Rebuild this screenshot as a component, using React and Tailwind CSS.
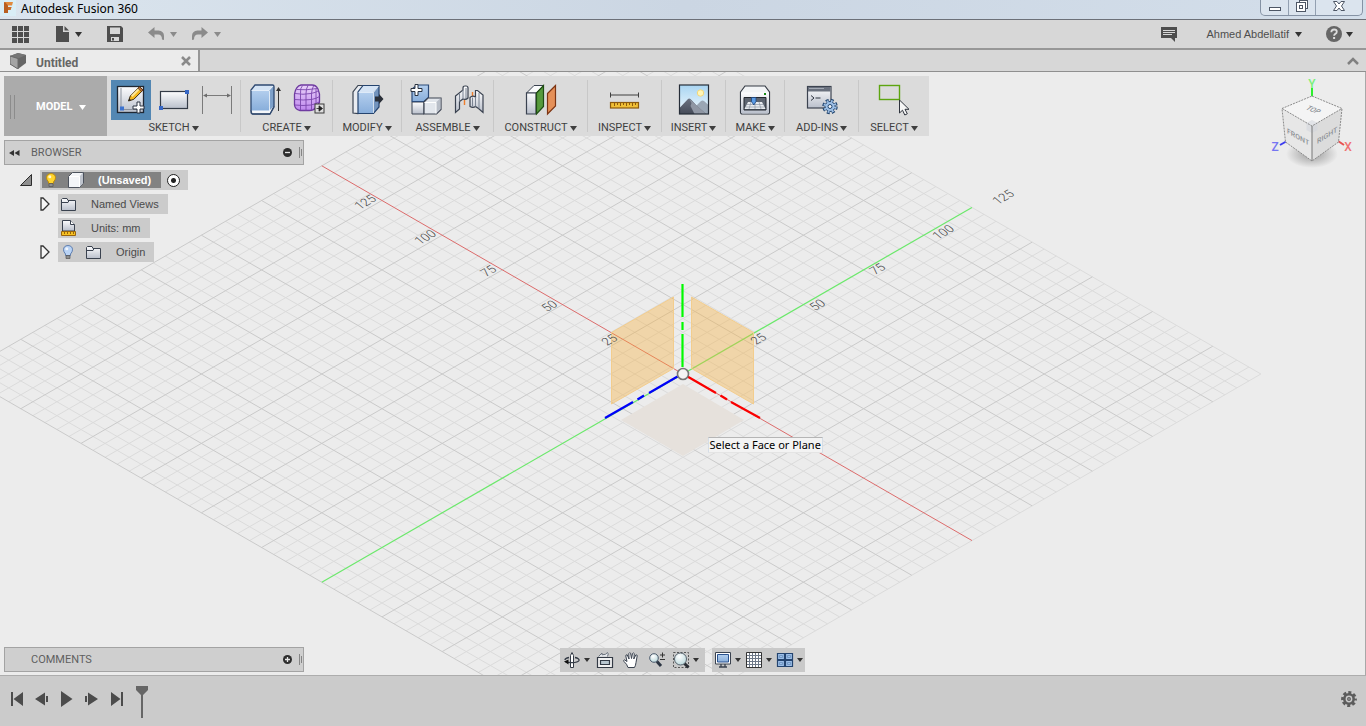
import { useState } from "react";

const DX = 12.04;
const DY = 6.94;
const MIN = -30;
const MAX = 24;

// a runs along the red axis, b along the green one
const project = (a, b) => [683 + (a + b) * DX, 374 + (a - b) * DY];

const gridPath = (major) => {
  let d = "";
  for (let i = MIN; i <= MAX; i++) {
    if (i === 0 || (i % 5 === 0) !== major) continue;
    d += `M${project(i, MIN)}L${project(i, MAX)}M${project(MIN, i)}L${project(MAX, i)}`;
  }
  return d;
};

const rulerLabels = [
  ["125", 360, 210],
  ["100", 420, 245],
  ["75", 486, 277],
  ["50", 547, 312],
  ["25", 607, 346],
  ["125", 998, 205],
  ["100", 938, 240],
  ["75", 875, 275],
  ["50", 815, 311],
  ["25", 756, 345],
];

function Caret({ className = "" }) {
  return (
    <svg width="7" height="5" viewBox="0 0 7 5" className={`shrink-0 ${className}`}>
      <path d="M0 0h7L3.5 5z" fill="currentColor" />
    </svg>
  );
}

function Icon({ size = 30, className = "", children }) {
  return (
    <svg width={size} height={size} viewBox={`0 0 ${size} ${size}`} className={`shrink-0 overflow-visible ${className}`} fill="none">
      {children}
    </svg>
  );
}

function Gradients() {
  return (
    <svg width="0" height="0" className="absolute" aria-hidden="true">
      <defs>
        <linearGradient id="steel" x1="0" y1="0" x2="0" y2="1">
          <stop offset="0" stopColor="#fdfdfe" />
          <stop offset="1" stopColor="#b9bfcb" />
        </linearGradient>
        <linearGradient id="blue" x1="0" y1="0" x2="0" y2="1">
          <stop offset="0" stopColor="#b4cfee" />
          <stop offset="1" stopColor="#88aedb" />
        </linearGradient>
        <linearGradient id="purple" x1="0" y1="0" x2="0" y2="1">
          <stop offset="0" stopColor="#e9d3f9" />
          <stop offset="1" stopColor="#be86ee" />
        </linearGradient>
        <linearGradient id="sky" x1="0" y1="0" x2="0" y2="1">
          <stop offset="0" stopColor="#a9d5f2" />
          <stop offset="1" stopColor="#f2f9fd" />
        </linearGradient>
        <linearGradient id="rock" x1="0" y1="0" x2="0" y2="1">
          <stop offset="0" stopColor="#6b7180" />
          <stop offset="1" stopColor="#454b58" />
        </linearGradient>
        <radialGradient id="lens" cx="0.4" cy="0.3" r="0.8">
          <stop offset="0" stopColor="#ffffff" />
          <stop offset="1" stopColor="#b4d4d8" />
        </radialGradient>
        <radialGradient id="shade">
          <stop offset="0" stopColor="#777" stopOpacity="0.7" />
          <stop offset="1" stopColor="#777" stopOpacity="0" />
        </radialGradient>
      </defs>
    </svg>
  );
}

const Plus = ({ x, y }) => (
  <path
    transform={`translate(${x} ${y})`}
    d="M-1.5-5.5h3v4h4v3h-4v4h-3v-4h-4v-3h4z"
    fill="#fff"
    stroke="#2b3340"
  />
);

const icons = {
  sketch: (
    <Icon>
      <rect x="1.5" y="1.5" width="26" height="26" fill="url(#steel)" stroke="#1f2733" strokeWidth="1.3" />
      <path d="M5 3v21M4 24.5h18" stroke="#8a919c" />
      <rect x="4" y="21.5" width="4" height="4" fill="#3d73cf" />
      <path d="M12.500 16l1.800-5L23.500 1.800l3.600 3.200-9.300 9.300z" fill="#f5b81e" stroke="#3b2a10" />
      <path d="M15 10.500l7.500-7.500 1.500 1.300-7.500 7.700z" fill="#fde79a" />
      <path d="M22 3.300l1.500-1.500 3.600 3.200-1.600 1.600z" fill="#b9703b" stroke="#4b2a12" strokeWidth="0.7" />
      <path d="M12.500 16l.8-2.500 1.700 1.600z" fill="#222" />
      <Plus x={22.5} y={22.5} />
    </Icon>
  ),
  rectangle: (
    <Icon>
      <rect x="1.5" y="6.5" width="27" height="17" fill="url(#steel)" stroke="#333a46" strokeWidth="1.2" />
      <rect x="26" y="5" width="4" height="4" fill="#3767c6" />
      <rect x="0" y="21" width="4" height="4" fill="#3767c6" />
    </Icon>
  ),
  dimension: (
    <Icon>
      <path d="M.5 1v28M29.5 1v28M2 10.5h26" stroke="#7b7b7b" />
      <path d="M1 10.5l4-2v4zM29 10.5l-4-2v4z" fill="#6d6d6d" />
    </Icon>
  ),
  extrude: (
    <Icon>
      <path d="M1 25l4-4h19l-4 8H2z" fill="#f4f6f9" stroke="#3b4452" />
      <path d="M1 5h18.5v20.5H1z" fill="url(#blue)" />
      <path d="M1 5l4-5h19l-4.500 5z" fill="#d5e4f5" />
      <path d="M19.500 5L24 0v21l-4.500 4.500z" fill="#7ea1ca" />
      <path d="M1 27V5l4-5h17.500q1.500 0 1.500 1.500V22l-4 7H3q-2 0-2-2z" stroke="#2f4a72" strokeWidth="1.3" />
      <path d="M1.500 5.500h17.500L23 1M19.500 6v20" stroke="#f0f6fc" strokeWidth="0.8" />
      <path d="M28.500 5v21" stroke="#333" />
      <path d="M28.500 2l2.500 4h-5z" fill="#333" />
    </Icon>
  ),
  form: (
    <Icon>
      <path d="M8 0h11q4 0 6 4l1.500 5v8q-1 4-4 6-2 2.500-6 2.500H7q-5-1-5.500-5.500V9Q3 1 8 0z" fill="url(#purple)" stroke="#6e3aa0" strokeWidth="1.300" />
      <path d="M2 8.500q8 1.500 16 0 5-1 8-3M1.500 14.500q9 1 17 0 5-1 8-3M2 20q8 1 16 0 5-1 8-3M7.500 8.500v16.500M13 8.500v17M18.500 8.500v16.500M7.500 8.500Q7 3 9.500.500M13 8.500q0-5 2-8M18.500 8.500q.5-5 2-7.500M4 4.500q9 1 20-1M23 4v19" stroke="#7a46ad" strokeWidth="0.900" />
      <rect x="22" y="19" width="9" height="9" fill="#dedede" stroke="#3a3a3a" />
      <path d="M23.500 23.500h3M26 20.800l3.500 2.700-3.500 2.700z" fill="#222" stroke="#222" strokeWidth="0.800" />
    </Icon>
  ),
  pressPull: (
    <Icon>
      <path d="M1 28V7l5-6.500h5V22l-5 6.500z" fill="#e9ecf1" stroke="#3b4452" strokeWidth="1.200" />
      <path d="M6 7h15.500v21.500H6z" fill="url(#blue)" />
      <path d="M6 7L11 .5h16L21.500 7z" fill="#d5e4f5" />
      <path d="M21.500 7L27 .5V22l-5.500 6.500z" fill="#7394bd" />
      <path d="M6 28.500V7L11 .5h16V22l-5.500 6.500z" stroke="#25446f" strokeWidth="1.200" />
      <path d="M6.500 7.500h15v20.500M21.500 7.500L26.500 1" stroke="#f0f6fc" strokeWidth="0.700" />
      <path d="M23 11.500h4V9l4.500 5-4.500 5v-2.500h-4z" fill="#2a2f38" />
    </Icon>
  ),
  component: (
    <Icon>
      <path d="M1 17h12v12H1z" fill="url(#steel)" stroke="#3d4452" />
      <path d="M1 16.500V4l5-4h11.500v12.500L13 16.500z" fill="url(#blue)" stroke="#2b4a78" strokeWidth="1.200" />
      <path d="M13 17l4-4h13v11.500L25.500 29H13z" fill="#e2e6ec" stroke="#3d4452" strokeWidth="1.200" />
      <path d="M25 17.500L29.500 13v11L25 28.500z" fill="#b8bec8" />
      <path d="M13.500 17.500H25V28.500" stroke="#fff" />
      <Plus x={5.5} y={5} />
    </Icon>
  ),
  joint: (
    <Icon>
      <path d="M1.500 11L9 5V3Q9 1 11 1h1q2 0 2 2v10q-2 2-5 1l-3.500 2.500V24l-4 3.500z" fill="url(#steel)" stroke="#3a4250" strokeWidth="1.200" />
      <path d="M5.500 8.500v8M9 5v9M12 3v10.500" stroke="#7b8493" />
      <path d="M10.500 15v5M18.500 7v5" stroke="#ee7d2c" strokeWidth="1.400" />
      <path d="M16 12.500q2.500-2.500 5.500-.5V5.500h2L29 10v17.500l-4.500-4-3-2q-2.500 1.800-5.500 0z" fill="url(#steel)" stroke="#3a4250" strokeWidth="1.200" />
      <path d="M21.500 12v9.500M25 8v15.500M18.500 12.500v9" stroke="#7b8493" />
    </Icon>
  ),
  plane: (
    <Icon>
      <path d="M.5 8L8 .5h9.500L10 8z" fill="#fafbfc" stroke="#3a4250" />
      <path d="M.5 8H10v21H.5z" fill="url(#steel)" stroke="#3a4250" strokeWidth="1.200" />
      <path d="M10.500 8L17.500.5v21L10.500 29z" fill="#569a3c" stroke="#1f4d14" strokeWidth="1.200" />
      <path d="M21.500 8.500L29.500.5v20.500L21.500 29z" fill="#e59058" stroke="#7d3513" strokeWidth="1.200" />
    </Icon>
  ),
  measure: (
    <Icon>
      <path d="M.5 7.500v5M28.500 7.500v5M1 10h27" stroke="#3f3f3f" />
      <rect x=".5" y="17.500" width="28" height="5.500" fill="#f0bf35" stroke="#8d5a0d" strokeWidth="1.200" />
      <path d="M4.500 18v3M7.500 18v2M10.500 18v3M13.500 18v2M16.500 18v3M19.500 18v2M22.500 18v3M25.500 18v2" stroke="#8d5a0d" />
    </Icon>
  ),
  canvas: (
    <Icon>
      <rect x=".5" y="0" width="29" height="29" fill="url(#sky)" />
      <circle cx="21.500" cy="8" r="3.200" fill="#fff6b8" stroke="#f3d77a" />
      <path d="M14 24l8-8q1.500-1 3 0l4.500 4v9H14z" fill="#9aa6b4" />
      <path d="M.5 23L9 14q1-1 2.500 0l6 6.500L27 29H.5z" fill="url(#rock)" />
      <path d="M10.500 14l2 4-1 3 4 8H27L16 19z" fill="#9097a4" />
      <rect x=".5" y="0" width="29" height="29" stroke="#262d38" strokeWidth="1.200" />
    </Icon>
  ),
  print: (
    <Icon>
      <path d="M.5 7L5 1h20l4.500 6v20q0 2-2 2h-25q-2 0-2-2z" fill="#f2f4f6" stroke="#343a44" strokeWidth="1.200" />
      <path d="M1 7.500h28v20q0 1-1.500 1h-25q-1.500 0-1.500-1z" fill="url(#steel)" />
      <rect x="24" y="8" width="2" height="2" fill="#168a16" />
      <path d="M4 12.500h22V25H4z" fill="#5d6470" stroke="#23272e" />
      <path d="M8 17h14l3.500 7h-21z" fill="#e8ebef" />
      <path d="M7 19.500h16M6 22h18M11 17l-2 7M15 17v7M19 17l2 7" stroke="#8e97a5" strokeWidth="0.700" />
      <path d="M11.500 12.500h4.500v4l-2.200 3.500-2.300-3.500z" fill="#5b9ce6" stroke="#1d447e" strokeWidth="0.800" />
    </Icon>
  ),
  scripts: (
    <Icon>
      <rect x=".5" y="1.500" width="23.500" height="21.500" fill="url(#steel)" stroke="#3c4350" strokeWidth="1.200" />
      <path d="M1 2h22.500v4.500H1z" fill="#69707d" />
      <path d="M2 3.500h15" stroke="#a3a9b4" />
      <path d="M4 10.500l3 2.500-3 2.500M8.500 13h5" stroke="#2f3540" />
      <circle cx="23" cy="21.500" r="5.500" stroke="#23466f" strokeWidth="4.500" strokeDasharray="2.500 1.820" />
      <circle cx="23" cy="21.500" r="5" fill="#9dbfe6" stroke="#23466f" />
      <circle cx="23" cy="21.500" r="5.300" stroke="#9dbfe6" strokeWidth="2.600" strokeDasharray="1.600 2.560" strokeDashoffset="-0.400" />
      <circle cx="23" cy="21.500" r="2" fill="#f3f7fb" stroke="#23466f" />
    </Icon>
  ),
  select: (
    <Icon>
      <rect x=".5" y=".5" width="20" height="14" stroke="#5da510" strokeWidth="1.400" />
      <path d="M20.500 15v13l3-2.800 2.300 4.800 2.500-1.200-2.300-4.500h4z" fill="#f6f6f6" stroke="#2e333c" />
    </Icon>
  ),
};

const toolGroups = [
  { label: "SKETCH", width: "w-[134px]", tools: ["sketch", "rectangle", "dimension"] },
  { label: "CREATE", width: "w-[92px]", tools: ["extrude", "form"] },
  { label: "MODIFY", width: "w-[69px]", tools: ["pressPull"] },
  { label: "ASSEMBLE", width: "w-[92px]", tools: ["component", "joint"] },
  { label: "CONSTRUCT", width: "w-[94px]", tools: ["plane"] },
  { label: "INSPECT", width: "w-[74px]", tools: ["measure"] },
  { label: "INSERT", width: "w-[64px]", tools: ["canvas"] },
  { label: "MAKE", width: "w-[59px]", tools: ["print"] },
  { label: "ADD-INS", width: "w-[74px]", tools: ["scripts"] },
  { label: "SELECT", width: "w-[70px]", tools: ["select"] },
];

function TitleBar() {
  return (
    <header className="flex h-5 shrink-0 items-start justify-between border-b border-[#6c7078] bg-linear-to-r from-[#dbe5ee] via-[#cbd6e3] to-[#d3deea]">
      <div className="flex items-center gap-[5px]">
        <svg width="16" height="17" viewBox="0 0 16 17">
          <path d="M0 0h16v16H0z" fill="#d9eef6" />
          <path d="M4 13V3q0-1 1-1h8l-1 3.500H8V7h3.500l-1 3H8v3z" fill="#e28a3c" />
          <path d="M4 13V3q0-1 1-1l3 3.500V13z" fill="#b95f20" />
          <path d="M8 7h3.500l-1 3H8z" fill="#c76d28" />
        </svg>
        <h1 className="font-['Noto_Sans'] text-xs leading-[17px] text-black">Autodesk Fusion 360</h1>
      </div>
      <div className="mr-[3px] flex h-4 divide-x divide-[#93a0b1] rounded-b-[5px] border border-t-0 border-[#8592a4] bg-[#dbe4ee]">
        <button aria-label="Minimize" className="flex w-7 items-center justify-center">
          <svg width="12" height="12" viewBox="0 0 12 12">
            <rect x=".5" y="5.500" width="11" height="3" fill="#fff" stroke="#4d5665" />
          </svg>
        </button>
        <button aria-label="Restore" className="flex w-[27px] items-start justify-center">
          <svg width="12" height="13" viewBox="0 0 12 13" fill="#fff" stroke="#4d5665">
            <rect x="3.500" y="0.500" width="8" height="8" />
            <rect x=".5" y="2.500" width="9" height="9" />
            <rect x="3.500" y="5.500" width="3" height="3" />
          </svg>
        </button>
        <button aria-label="Close" className="flex w-[46px] items-start justify-center pt-px">
          <svg width="12" height="11" viewBox="0 0 12 11">
            <path d="M.5.500h3.500l2 2.500 2-2.500h3.500L8.500 5l3 4.500H8L6 7 4 9.500H.5l3-4.500z" fill="#fff" stroke="#4d5665" />
          </svg>
        </button>
      </div>
    </header>
  );
}

function AppBar() {
  return (
    <div className="flex h-[30px] shrink-0 items-center justify-between border-b-2 border-[#979797] bg-[#d7d7d7] pr-[13px] pl-3 text-[#4e4e4e]">
      <div className="flex items-center gap-[25px]">
        <button aria-label="Data panel" className="pr-[2px]">
          <svg width="17" height="17" viewBox="0 0 17 17" fill="currentColor">
            <path d="M0 0h5v5H0zM6 0h5v5H6zM12 0h5v5h-5zM0 6h5v5H0zM6 6h5v5H6zM12 6h5v5h-5zM0 12h5v5H0zM6 12h5v5H6zM12 12h5v5h-5z" />
          </svg>
        </button>
        <button aria-label="File" className="flex items-center gap-[6px]">
          <svg width="13" height="16" viewBox="0 0 13 16" fill="currentColor">
            <path d="M0 0h7v6h6v10H0z" />
            <path d="M8.500 0L13 4.500H8.500z" />
          </svg>
          <Caret className="text-[#333]" />
        </button>
        <button aria-label="Save">
          <svg width="16" height="16" viewBox="0 0 16 16">
            <path d="M0 0h14l2 2v14H0z" fill="currentColor" />
            <path d="M3 1.500h10V8H3z" fill="#d7d7d7" />
            <path d="M4 11h8v4H4z" fill="#d7d7d7" />
            <path d="M5 12h2v2.500H5z" fill="currentColor" />
          </svg>
        </button>
        <div className="flex gap-[15px] text-[#8b8b8b]">
          <button aria-label="Undo" className="flex items-center gap-[6px]">
            <svg width="16" height="14" viewBox="0 0 16 14" fill="currentColor">
              <path d="M0 5.500L6.500 0v3.500h4Q16 4 16 9v4l-2-.5Q14 7.500 10 7.500H6.500V11z" />
            </svg>
            <Caret />
          </button>
          <button aria-label="Redo" className="flex items-center gap-[6px]">
            <svg width="16" height="14" viewBox="0 0 16 14" fill="currentColor">
              <path d="M16 5.500L9.500 0v3.500h-4Q0 4 0 9v4l2-.5Q2 7.500 6 7.500h3.500V11z" />
            </svg>
            <Caret />
          </button>
        </div>
      </div>
      <div className="flex items-center">
        <button aria-label="Comments" className="mr-[29px]">
          <svg width="16" height="15" viewBox="0 0 16 15">
            <path d="M0 0h16v11h-2v4l-4-4H0z" fill="currentColor" />
            <path d="M2 3.500h12M2 5.500h12M2 7.500h9" stroke="#d7d7d7" />
          </svg>
        </button>
        <button className="mr-6 flex items-center gap-[6px] pt-px text-[11px]">
          Ahmed Abdellatif
          <Caret className="text-[#333]" />
        </button>
        <button aria-label="Help" className="flex items-center gap-1">
          <svg width="16" height="16" viewBox="0 0 16 16">
            <circle cx="8" cy="8" r="8" fill="#666" />
            <path d="M5.300 6.300q0-2.800 2.800-2.800 2.700 0 2.700 2.300 0 1.300-1.500 2.100-1.200.7-1.200 1.900" fill="none" stroke="#dcdcdc" strokeWidth="1.800" />
            <path d="M7.100 11h2v2h-2z" fill="#dcdcdc" />
          </svg>
          <Caret className="text-[#333]" />
        </button>
      </div>
    </div>
  );
}

function DocumentTabs() {
  return (
    <div className="flex h-[22px] shrink-0 items-stretch justify-between border-b border-[#8f8f8f] bg-[#d7d7d7]">
      <div className="flex w-[200px] items-center justify-between border-r-2 border-[#979797] bg-[#ebebeb] pr-[7px] pl-[10px]">
        <span className="flex items-center gap-[10px] font-[Roboto] text-xs font-bold text-[#666]">
          <svg width="16" height="16" viewBox="0 0 16 16">
            <path d="M0 3L8 0l8 2v8l-8 6-8-5z" fill="#666" />
            <path d="M0 3l8 2.500V16l-8-5z" fill="#a5a5a5" />
            <path d="M0 3L8 0l8 2-8 3.500z" fill="#767676" />
            <path d="M0 3l8 2.500V16l-8-5z" fill="none" stroke="#6a6a6a" />
          </svg>
          <span className="pt-1">Untitled</span>
        </span>
        <button aria-label="Close document" className="text-[#8a8a8a]">
          <svg width="10" height="10" viewBox="0 0 10 10">
            <path d="M1 1l8 8M9 1L1 9" stroke="currentColor" strokeWidth="2.500" />
          </svg>
        </button>
      </div>
      <button aria-label="Collapse" className="mr-[7px]">
        <svg width="12" height="8" viewBox="0 0 12 8">
          <path d="M1 7l5-5 5 5" fill="none" stroke="#808080" strokeWidth="2.500" />
        </svg>
      </button>
    </div>
  );
}

function Ribbon() {
  const [active, setActive] = useState("sketch");

  return (
    <div className="flex h-[60px] w-fit bg-[#dbdbdb] font-[Roboto] text-[11px] text-[#3f3f3f]">
      <button className="flex w-[103px] items-center gap-[6px] bg-[#ababab] pt-[2px] pl-[6px] font-bold text-white">
        <svg width="5" height="24" viewBox="0 0 5 24" className="mr-[15px]">
          <path d="M.5 0v24M4.500 0v24" stroke="#8c8c8c" />
        </svg>
        MODEL
        <Caret />
      </button>
      <div className="flex divide-x divide-[#c8c8c8] py-1">
        {toolGroups.map((group) => (
          <div key={group.label} className={`flex flex-col items-center ${group.width}`}>
            <div className="flex gap-[3px]">
              {group.tools.map((tool) => (
                <button
                  key={tool}
                  aria-label={tool}
                  onClick={() => setActive(tool)}
                  className={`flex h-10 w-10 items-center justify-center ${active === tool ? "bg-[#5387b3]" : ""}`}
                >
                  {icons[tool]}
                </button>
              ))}
            </div>
            <button className="flex items-center gap-[2px] leading-4">
              {group.label}
              <Caret />
            </button>
          </div>
        ))}
      </div>
    </div>
  );
}

function PanelHeader({ title, open }) {
  return (
    <div className="flex h-[25px] w-[300px] items-center border border-[#a3a3a3] bg-[#cfcfcf] font-[Roboto] text-[11px] text-[#5f5f5f]">
      <span className="flex w-[26px] pl-1">
        {open && (
          <svg width="11" height="6" viewBox="0 0 11 6">
            <path d="M5 0v6L0 3zM10.500 0v6l-5-3z" fill="#333" />
          </svg>
        )}
      </span>
      <h2 className="flex-1 pt-[2px]">{title}</h2>
      <button aria-label={open ? "Hide" : "Show"} className="mr-[7px]">
        <svg width="9" height="9" viewBox="0 0 9 9">
          <circle cx="4.500" cy="4.500" r="4.500" fill="#2d2d2d" />
          <path d={open ? "M2 4.500h5" : "M2 4.500h5M4.500 2v5"} stroke="#e6e6e6" strokeWidth="1.300" />
        </svg>
      </button>
      <svg width="4" height="11" viewBox="0 0 4 11">
        <path d="M.5 0v11M2.500 2v7" stroke="#858585" />
      </svg>
    </div>
  );
}

function Bulb({ fill, stroke }) {
  return (
    <svg width="10" height="15" viewBox="0 0 10 15">
      <path d="M5 .5q4.500.300 4.500 4.300 0 2-2 4.200v1.500h-5V9q-2-2.200-2-4.200Q.5.800 5 .5z" fill={fill} stroke={stroke} />
      <circle cx="3.800" cy="3.800" r="1.500" fill="#fff" opacity="0.800" />
      <path d="M3 10.500h4v3H3z" fill="#8d8d8d" stroke="#555" strokeWidth="0.700" />
    </svg>
  );
}

function Folder() {
  return (
    <svg width="15" height="13" viewBox="0 0 15 13">
      <path d="M.5 12.500V1.500L1.500.5H6l1 2h7.500v10z" fill="url(#steel)" stroke="#3a424f" />
      <path d="M1 4.500h6l1-2" fill="none" stroke="#3a424f" />
    </svg>
  );
}

function Expander() {
  return (
    <button aria-label="Expand" className="flex w-[18px]">
      <svg width="10" height="14" viewBox="0 0 10 14">
        <path d="M1 1h2l6 6-6 6H1z" fill="#f6f6f6" stroke="#333" strokeWidth="1.300" />
      </svg>
    </button>
  );
}

function BrowserTree() {
  return (
    <ul className="mt-[5px] flex flex-col gap-1 text-[11px] text-[#4a4a4a]">
      <li className="flex h-5 items-center pl-4">
        <button aria-label="Collapse" className="flex w-5">
          <svg width="12" height="12" viewBox="0 0 12 12">
            <path d="M.5 11.500L11.500.5v11z" fill="#8f8f8f" stroke="#2d2d2d" />
          </svg>
        </button>
        <div className="flex h-5 items-center gap-[6px] bg-[#cbcbcb] pr-2 pl-[2px]">
          <span className="flex h-4 items-center bg-[#828282] pr-[10px] pl-1 font-bold text-white">
            <Bulb fill="#ffd42e" stroke="#b98a12" />
            <svg width="16" height="16" viewBox="0 0 16 16" className="mr-[14px] ml-3">
              <path d="M.5 4.500l4-4h11v10.500l-4 4.500H.5z" fill="#f3f5f8" stroke="#4c525d" />
              <path d="M11.500 4.500l3.500-4v10.500l-3.500 4z" fill="#bfc4cd" />
              <path d="M1 4.500h10.500V15" fill="none" stroke="#fff" />
            </svg>
            (Unsaved)
          </span>
          <input type="radio" name="activeComponent" aria-label="Activate component" defaultChecked className="h-[13px] w-[13px] appearance-none rounded-full border border-[#222] bg-[radial-gradient(circle,#222_0_2px,#fff_3px)]" />
        </div>
      </li>
      <li className="flex h-5 items-center pl-9">
        <Expander />
        <div className="flex h-5 items-center gap-[15px] bg-[#cbcbcb] pr-[9px] pl-[3px]">
          <Folder />
          Named Views
        </div>
      </li>
      <li className="flex h-5 items-center pl-[54px]">
        <div className="flex h-5 items-center gap-[15px] bg-[#cbcbcb] pr-[9px] pl-[3px]">
          <svg width="15" height="16" viewBox="0 0 15 16">
            <path d="M1.500 11V.5h8l4 4V11z" fill="url(#steel)" stroke="#3a424f" />
            <path d="M9.500.500v4h4" fill="#fff" stroke="#3a424f" />
            <path d="M.5 11.500h14v4H.5z" fill="#f5c021" stroke="#9a650b" />
            <path d="M3.500 12v2M6.500 12v2M9.500 12v2M12.500 12v2" stroke="#9a650b" />
          </svg>
          Units: mm
        </div>
      </li>
      <li className="flex h-5 items-center pl-9">
        <Expander />
        <div className="flex h-5 items-center bg-[#cbcbcb] pr-[9px] pl-[5px]">
          <Bulb fill="#b9d3f5" stroke="#5f7fb0" />
          <span className="flex items-center gap-[15px] pl-[13px]">
            <Folder />
            Origin
          </span>
        </div>
      </li>
    </ul>
  );
}

function Scene() {
  return (
    <svg className="absolute inset-0 h-full w-full" viewBox="0 72 1365 603" preserveAspectRatio="xMidYMid slice" fill="none">
      <path d={gridPath(false)} stroke="#dbdbdb" />
      <path d={gridPath(true)} stroke="#cacaca" />
      <path d={`M${project(MIN, 0)}L${project(MAX, 0)}`} stroke="#dc6b6b" />
      <path d={`M${project(0, MIN)}L${project(0, MAX)}`} stroke="#6be86b" strokeWidth="1.200" />

      <path d="M683 384l61 36-61 36-62-36z" fill="#e6e1dc" />
      <path d="M611.500 332.500l62-35.500v71.500l-62 35.500z" fill="#f7b13c" fillOpacity="0.380" stroke="#f3cd8d" />
      <path d="M753.500 332.500l-62-35.500v71.500l62 35.500z" fill="#f7b13c" fillOpacity="0.380" stroke="#f3cd8d" />

      <g fontFamily="Roboto, sans-serif" fontSize="12" fontWeight="300" fill="#444">
        {rulerLabels.map(([text, x, y]) => (
          <text key={`${text}-${x}`} transform={`translate(${x} ${y}) rotate(-30) skewX(20)`}>
            {text}
          </text>
        ))}
      </g>

      <path d="M682.500 284v33M682.500 322v8M682.500 334v33" stroke="#00fa00" strokeWidth="2.200" />
      <path d="M677.500 376.500L649 393M644 395.500l-6.500 4M633 402l-28 16" stroke="#0000fa" strokeWidth="2.200" />
      <path d="M687.500 376.500L716 393M720.500 395.500l6.500 4M731 402l29 16" stroke="#fa0000" strokeWidth="2.200" />
      <circle cx="683" cy="374" r="5.500" fill="#f4f4f4" stroke="#777" strokeWidth="1.600" />
    </svg>
  );
}

function ViewCube() {
  return (
    <svg className="absolute top-1 right-[11px] font-[Roboto]" width="84" height="100" viewBox="1270 76 84 100" fill="none">
      <ellipse cx="1312" cy="154" rx="26" ry="14" fill="url(#shade)" />
      <path d="M1312 88v9" stroke="#2df02d" strokeWidth="2" />
      <path d="M1287 141l-7 4" stroke="#3c3cf0" strokeWidth="2" />
      <path d="M1338 141l6 4" stroke="#e85050" strokeWidth="2" />
      <path d="M1312 96l30 12.500-30 17.500-30-17.500z" fill="#f4f4f4" />
      <path d="M1282 108.500l30 17.500v35l-26.500-19z" fill="#e7e7e7" />
      <path d="M1342 108.500L1312 126v35l26.500-19z" fill="#dcdcdc" />
      <path d="M1312 120l5.500 3v7l-5.500 3-5.500-3v-7z" fill="#cfd3db" opacity="0.500" />
      <path d="M1312 96l30 12.500-3.500 33.500-26.500 19-26.500-19-3.500-33.500zM1282 108.500l30 17.500 30-17.500" stroke="#8a8a8a" strokeDasharray="2 1" />
      <path d="M1312 126v35" stroke="#777" />
      <g fontSize="7" fontWeight="500" fill="#8d9196">
        <text transform="translate(1305 109) rotate(22) skewX(-30)">TOP</text>
        <text transform="translate(1287 133) skewY(30)">FRONT</text>
        <text transform="translate(1317 144) skewY(-32)">RIGHT</text>
      </g>
      <g fontSize="12" fontWeight="500" textAnchor="middle">
        <text x="1312" y="88" fill="#7af07a">Y</text>
        <text x="1275" y="151" fill="#7676f2">Z</text>
        <text x="1348" y="151" fill="#f07272">X</text>
      </g>
    </svg>
  );
}

function NavButton({ label, menu, children }) {
  return (
    <button
      aria-label={label}
      className={`flex h-6 items-center gap-1 text-[#333] ${menu ? "w-[31px] pl-[3px]" : "w-[26px] justify-center"}`}
    >
      <Icon size={16}>{children}</Icon>
      {menu && (
        <svg width="6" height="4" viewBox="0 0 6 4" className="shrink-0">
          <path d="M0 0h6L3 4z" fill="currentColor" />
        </svg>
      )}
    </button>
  );
}

function NavigationBar() {
  return (
    <div className="flex gap-[7px]">
      <div className="flex bg-[#c9c9c9] pr-1 pl-px">
        <NavButton label="Orbit" menu>
          <path d="M6.500 15.500V3.500L8 .5l1.500 3v12z" fill="#fff" stroke="#333a45" />
          <path d="M11 5.500q4.500 1 4 3-1 2-7 2.200-4 0-6.500-1M5 5.500Q1 6.300 1 8" stroke="#333a45" strokeWidth="1.300" />
          <path d="M0 9.500l4.500-2v5z" fill="#111" />
        </NavButton>
        <NavButton label="Look at">
          <path d="M1.500 4.500L5 1 5 2.800q4 .2 5.500-2.300 1.500 1 0 4" stroke="#6a717c" fill="#e6e9ed" />
          <path d="M.5 5.500h15v10H.5z" fill="#f2f2f2" stroke="#333a45" strokeWidth="1.200" />
          <path d="M3.500 8.500h9v4h-9z" fill="#b9c7d0" stroke="#333a45" strokeWidth="1.200" />
        </NavButton>
        <NavButton label="Pan">
          <path d="M5 15.500Q4 12 1 9.500.200 8 1.500 7.800L4 9.500 2.800 4q0-1.500 1.400-1.200L6 7 5.800 1.600Q6.500 0 7.600 1.300L8.500 6.500l1-5Q10.500.3 11.300 1.600L10.800 7l2-4q1.400-.6 1.400.8L13 10.500q-.3 3-1.500 5z" fill="#fff" stroke="#3a424f" />
        </NavButton>
        <NavButton label="Zoom">
          <path d="M8 9.500l4 4.500" stroke="#2b3442" strokeWidth="3" />
          <circle cx="5" cy="6" r="4.300" fill="url(#lens)" stroke="#4b5a6c" />
          <path d="M11 3h5M13.500.500v5M11 7.500h5" stroke="#333" />
        </NavButton>
        <NavButton label="Fit" menu>
          <path d="M.5.500h15v15H.5z" stroke="#555" strokeDasharray="2 1.500" />
          <path d="M11 11l4.500 4.500" stroke="#2b2f36" strokeWidth="3" />
          <circle cx="7.500" cy="7" r="6" fill="url(#lens)" stroke="#58646e" />
        </NavButton>
      </div>
      <div className="flex bg-[#c9c9c9]">
        <NavButton label="Display settings" menu>
          <path d="M6 12v2.500M10 12v2.500M4 15h8" stroke="#3a424f" strokeWidth="1.300" />
          <path d="M.5.500h15v11.500H.5z" fill="#fff" stroke="#3a424f" />
          <path d="M2.500 2.500h11v7.500h-11z" fill="url(#blue)" stroke="#2a5390" />
        </NavButton>
        <NavButton label="Grid settings" menu>
          <path d="M.5.500h15v15H.5z" fill="#fff" />
          <path d="M3.500 0v16M6.500 0v16M9.500 0v16M12.500 0v16M0 3.500h16M0 6.500h16M0 9.500h16M0 12.500h16" stroke="#6d7888" />
          <path d="M.5.500h15v15H.5z" stroke="#333" />
        </NavButton>
        <NavButton label="Viewports" menu>
          <path d="M.5 1.500h7v6h-7zM8.500 1.500h7v6h-7zM.5 8.500h7v6h-7zM8.500 8.500h7v6h-7z" fill="#9dbfe8" stroke="#24446f" strokeWidth="1.200" />
          <path d="M2.500 3.500h3v2h-3zM10.500 3.500h3v2h-3zM2.500 10.500h3v2h-3zM10.500 10.500h3v2h-3z" stroke="#6389b8" strokeWidth="0.700" />
        </NavButton>
      </div>
    </div>
  );
}

const playback = [
  ["Go to start", "M1 1h2v14H1zM13 1v14L3.500 8z"],
  ["Step back", "M0 8l10-6.500v13zM11 5h2v6h-2z"],
  ["Play", "M1 0l11.500 8L1 16z"],
  ["Step forward", "M13 8L3 1.500v13zM0 5h2v6H0z"],
  ["Go to end", "M11 1h2v14h-2zM1 1v14l9.500-7z"],
];

function Timeline() {
  return (
    <footer className="flex h-[51px] shrink-0 items-center justify-between border-t border-[#adadad] bg-[#cbcbcb] pr-[9px] pb-1 pl-1 text-[#4c4c4c]">
      <div className="flex items-center">
        {playback.map(([label, d]) => (
          <button key={label} aria-label={label} className="flex w-[25px] justify-center">
            <svg width="14" height="16" viewBox="0 0 14 16">
              <path d={d} fill="currentColor" />
            </svg>
          </button>
        ))}
        <svg width="12" height="32" viewBox="0 0 12 32" className="mt-[6px] ml-[7px] text-[#666]">
          <path d="M0 0h12v4L7 9v23H5V9L0 4z" fill="currentColor" />
        </svg>
      </div>
      <button aria-label="Timeline settings">
        <svg width="16" height="16" viewBox="0 0 16 16" fill="none" stroke="#5c5c5c">
          <circle cx="8" cy="8" r="6.500" strokeWidth="2.800" strokeDasharray="3 2.105" strokeDashoffset="1.500" />
          <circle cx="8" cy="8" r="4.700" strokeWidth="2.600" />
          <circle cx="8" cy="8" r="1.300" strokeWidth="1.300" />
        </svg>
      </button>
    </footer>
  );
}

export default function App() {
  return (
    <div className="flex h-screen flex-col overflow-hidden bg-[#ececec] font-['Liberation_Sans',sans-serif]">
      <Gradients />
      <TitleBar />
      <AppBar />
      <DocumentTabs />
      <main className="relative flex-1 overflow-hidden border-r border-[#a8a8a8]">
        <Scene />
        <ViewCube />
        <div className="relative flex h-full flex-col px-1 pt-1 pb-[3px]">
          <Ribbon />
          <div className="mt-1">
            <PanelHeader title="BROWSER" open />
            <BrowserTree />
          </div>
          <div className="mt-auto grid grid-cols-[1fr_auto_1fr] items-end">
            <PanelHeader title="COMMENTS" />
            <NavigationBar />
          </div>
        </div>
        <div role="tooltip" className="absolute top-[calc(50%+63px)] left-[calc(50%+25px)] border border-t-[#b5b5b5] border-r-[#d5dde6] border-b-[#e4e4e4] border-l-[#d5dde6] bg-[#f3f3f3] px-px font-['Noto_Sans'] text-[11px] leading-[14px] text-black">
          Select a Face or Plane
        </div>
      </main>
      <Timeline />
    </div>
  );
}
